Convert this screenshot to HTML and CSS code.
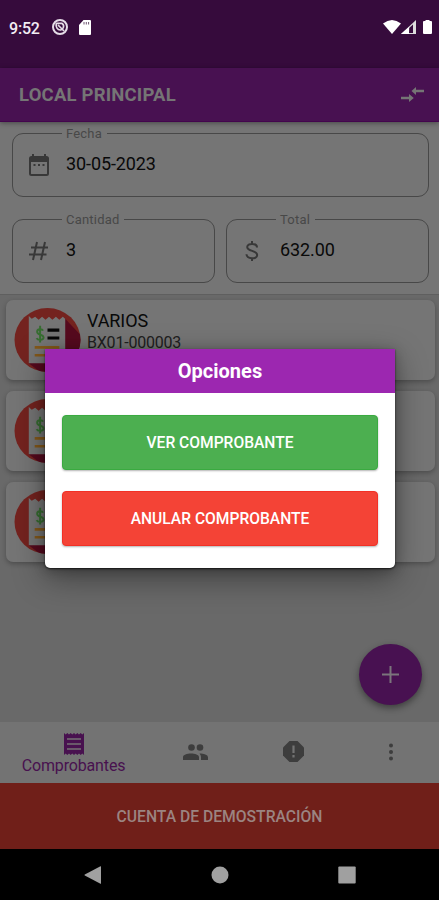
FILE: index.html
```html
<!DOCTYPE html>
<html lang="es">
<head>
<meta charset="utf-8">
<meta name="viewport" content="width=device-width, initial-scale=1">
<title>Local Principal</title>
<link rel="stylesheet" href="styles.css">
</head>
<body>
<svg class="defs" width="0" height="0" aria-hidden="true">
  <defs>
    <clipPath id="disc"><ellipse cx="34" cy="32.500" rx="33.500" ry="32.500"/></clipPath>
    <symbol id="receipt" viewBox="0 0 68 66">
      <g clip-path="url(#disc)">
        <path d="M0 0h68v66H0z" fill="#74231f"/>
        <path d="M51 10l17 18v38H28L15 56z" fill="#560a1e"/>
      </g>
      <path d="M15 8l3 3 3.500-2 3.500 3 3.500-3 3.500 3 3.500-3 3.500 3 3.500-3 3.500 3 3.500-3 2.500 2V56H15z" fill="#757575"/>
      <path d="M29.500 23c-1-2-6-2-6 1 0 4 6.500 2 6.500 6 0 3-6 3-7 .5M26.500 18v17" fill="none" stroke="#376e31" stroke-width="2"/>
      <path d="M34 22.500h12M34 30.500h12" stroke="#080808" stroke-width="3.200"/>
      <path d="M21 40h25M21 48h25" stroke="#84591a" stroke-width="2.600"/>
    </symbol>
  </defs>
</svg>
<div class="phone">
  <header class="status">
    <span class="clock">9:52</span>
    <svg class="status-app" width="18" height="18" viewBox="0 0 18 18"><circle cx="9" cy="9" r="7" fill="none" stroke="#e5dce7" stroke-width="2"/><path d="M5.300 5.300h5.500c3 2 2 6-1.300 6.700-3 .2-5-3-4.200-6.700M7 7l6 6" fill="none" stroke="#e5dce7" stroke-width="1.700"/></svg>
    <svg class="status-card" width="12" height="15" viewBox="0 0 12 15"><path d="M4.500 0H11q1 0 1 1v13q0 1-1 1H1q-1 0-1-1V5z" fill="#fff"/><path d="M5 2v2.500M7.300 2v2.500M9.600 2v2.500" stroke="#6d5470" stroke-width="1"/></svg>
    <svg class="status-wifi" width="18" height="14" viewBox="0 0 18 14"><path d="M0 3.500Q9-3.500 18 3.500L9 14z" fill="#fff"/></svg>
    <svg class="status-signal" width="15" height="14" viewBox="0 0 15 14"><path d="M0 14L15 0v14z" fill="#ddd"/><path d="M8 13l.2-5L12 4.500V13z" fill="#360b3c"/><path d="M0 14l8-7v7z" fill="#fff"/></svg>
    <svg class="status-battery" width="9" height="14" viewBox="0 0 9 14"><path d="M2.500 0h4v1H8q1 0 1 1v11q0 1-1 1H1q-1 0-1-1V2q0-1 1-1h1.500z" fill="#fff"/></svg>
  </header>

  <div class="appbar">
    <h1>LOCAL PRINCIPAL</h1>
    <svg width="23" height="15" viewBox="0 0 23 15" fill="#757575"><path d="M0 9.700h8V7l4.800 4L8 15v-2.700H0zM23 2.700h-8V0l-4.500 4L15 8V5.300h8z"/></svg>
  </div>

  <section class="filters">
    <div class="field">
      <span class="label">Fecha</span>
      <svg class="icon" width="22" height="24" viewBox="0 0 22 24"><rect x="2" y="4" width="18" height="18" rx="1.500" fill="none" stroke="#383838" stroke-width="2"/><path d="M2 4h18v5H2zM4 1h2v4H4zM16 1h2v4h-2zM5.500 11h2v2h-2zM10 11h2v2h-2zM14.500 11h2v2h-2z" fill="#383838"/></svg>
      <span class="value">30-05-2023</span>
    </div>
    <div class="field">
      <span class="label">Cantidad</span>
      <svg class="icon" width="22" height="20" viewBox="0 0 22 20"><path d="M9 1L5 19M17 1l-4 18M3 6.500H20M1 13.500h17.500" stroke="#383838" stroke-width="2" fill="none"/></svg>
      <span class="value">3</span>
    </div>
    <div class="field field-total">
      <span class="label">Total</span>
      <svg class="icon" width="14" height="20" viewBox="0 0 14 20"><path d="M12 6.500C12 1.800 2.200 1.800 2.200 6c0 4.800 10 3 10 8 0 4.500-10.400 4.500-10.700-.7M7 0v3M7 17v3" stroke="#383838" stroke-width="2" fill="none"/></svg>
      <span class="value">632.00</span>
    </div>
  </section>

  <main class="list">
    <article class="card">
      <svg class="avatar"><use href="#receipt"/></svg>
      <div class="info"><div class="name">VARIOS</div><div class="code">BX01-000003</div></div>
    </article>
    <article class="card"><svg class="avatar"><use href="#receipt"/></svg></article>
    <article class="card"><svg class="avatar"><use href="#receipt"/></svg></article>
    <button class="fab" aria-label="Agregar"><svg width="17" height="17" viewBox="0 0 17 17"><path d="M8.500 0v17M0 8.500h17" stroke="#7b757c" stroke-width="2"/></svg></button>
  </main>

  <nav class="tabs">
    <a class="tab active">
      <svg width="20" height="22" viewBox="0 0 20 22"><path d="M0 0l1.700 1.500L3.300 0 5 1.500 6.700 0l1.600 1.500L10 0l1.700 1.500L13.300 0 15 1.500 16.700 0l1.600 1.500L20 0v22l-1.700-1.500-1.600 1.500-1.700-1.500-1.700 1.500-1.600-1.500L10 22l-1.700-1.500L6.700 22 5 20.500 3.300 22l-1.600-1.500L0 22z" fill="#48114f"/><path d="M3 6h14M3 11h14M3 16h14" stroke="#747174" stroke-width="1.700"/></svg>
      <span>Comprobantes</span>
    </a>
    <a class="tab"><svg width="25" height="16" viewBox="0 0 25 16" fill="#3d3d3d"><circle cx="8.500" cy="3.500" r="3.300"/><circle cx="17" cy="3.500" r="3.300"/><path d="M0 16v-2.700C0 8.300 16 8.300 16 13.300V16zM18 16v-3q0-2-1.500-3.500c4 0 8.500 1 8.500 4V16z"/></svg></a>
    <a class="tab"><svg width="21" height="21" viewBox="0 0 21 21"><path d="M6.500 0h8L21 6.500v8L14.500 21h-8L0 14.500v-8z" fill="#3d3d3d"/><path d="M10.500 4.500v7.500M10.500 14v2.500" stroke="#737373" stroke-width="2.200"/></svg></a>
    <a class="tab"><svg width="6" height="18" viewBox="0 0 6 18" fill="#3d3d3d"><circle cx="3" cy="2.500" r="2"/><circle cx="3" cy="9" r="2"/><circle cx="3" cy="15.500" r="2"/></svg></a>
  </nav>

  <div class="demo"><span>CUENTA DE DEMOSTRACIÓN</span></div>

  <footer class="system">
    <svg width="17" height="18" viewBox="0 0 17 18"><path d="M17 .5v17q0 .5-1 0L.8 9.600q-.8-.6 0-1.200L16 .5q1-.5 1 0z" fill="#a0a0a0"/></svg>
    <svg width="18" height="18" viewBox="0 0 18 18"><circle cx="9" cy="9" r="8.500" fill="#a0a0a0"/></svg>
    <svg width="18" height="18" viewBox="0 0 18 18"><rect x=".3" y=".5" width="17.400" height="17" rx="1" fill="#a0a0a0"/></svg>
  </footer>

  <div class="dialog" role="dialog" aria-labelledby="dialog-title">
    <h2 id="dialog-title"><span>Opciones</span></h2>
    <div class="actions">
      <button class="action view"><span>VER COMPROBANTE</span></button>
      <button class="action cancel"><span>ANULAR COMPROBANTE</span></button>
    </div>
  </div>
</div>
</body>
</html>
```
FILE: styles.css
```css
* { box-sizing: border-box; }
body { margin: 0; font-family: Roboto, "Liberation Sans", sans-serif; background: #000; }
svg { display: block; flex: none; }
.defs { position: absolute; }
button { border: 0; padding: 0; font-family: inherit; }

.phone { position: relative; width: 439px; height: 900px; display: flex; flex-direction: column; overflow: hidden; }

.status { height: 68px; flex: none; background: #360b3c; display: flex; align-items: flex-start; padding: 19px 7px 0 9px; }
.clock { color: #f2edf3; font-size: 16px; font-weight: 500; line-height: 19px; width: 42px; letter-spacing: -.2px; }
.status-app { margin-top: -1px; }
.status-card { margin: 1px auto 0 10px; }
.status-wifi { margin-top: 1px; }
.status-signal { margin: 1px 7px 0 0; }
.status-battery { margin-top: 1px; }

.appbar { height: 54px; flex: none; background: #481151; display: flex; align-items: center; justify-content: space-between; padding: 0 15px 0 19px; border-bottom: 1px solid #43054d; box-shadow: 0 1px 5px rgba(0,0,0,.4); position: relative; z-index: 1; }
.appbar h1 { margin: 1px 0 0; font-size: 18.5px; font-weight: 700; color: #757575; letter-spacing: .2px; }

.filters { height: 173px; flex: none; background: #757575; padding: 11px 10px 12px 12px; display: grid; grid-template-columns: 203px 203px; grid-template-rows: 64px 64px; gap: 22px 11px; border-bottom: 1px solid #5f5f5f; }
.field { position: relative; border: 1px solid #484848; border-radius: 11px; display: flex; align-items: center; padding-left: 15px; }
.field:first-child { grid-column: 1 / -1; }
.field .label { position: absolute; left: 49px; top: -8px; padding: 0 5px 0 4px; background: #757575; color: #484848; font-size: 13px; line-height: 15px; letter-spacing: .2px; }
.field .value { margin-left: 16px; color: #090909; font-size: 18px; line-height: 22px; margin-bottom: 3px; letter-spacing: -.1px; }
.field-total { padding-left: 18px; }
.field-total .value { margin-left: 21px; }

.list { position: relative; flex: 1; background: #696969; padding: 5px 4px 0 6px; display: flex; flex-direction: column; gap: 11px; }
.card { height: 80px; flex: none; background: #757575; border-radius: 7px; box-shadow: 0 2px 5px rgba(0,0,0,.27); display: flex; padding: 8px 8px; }
.avatar { width: 67px; height: 65px; }
.info { margin-left: 6px; padding-top: 2px; }
.name { font-size: 18px; line-height: 21px; color: #090909; letter-spacing: -.1px; }
.code { font-size: 16px; line-height: 23px; color: #202020; letter-spacing: -.2px; }
.fab { position: absolute; right: 17px; bottom: 17px; width: 63px; height: 61px; border-radius: 50%; background: #481151; display: flex; align-items: center; justify-content: center; box-shadow: 0 3px 7px rgba(0,0,0,.42); }

.tabs { height: 61px; flex: none; background: #737373; display: grid; grid-template-columns: 147px 97px 98px 97px; }
.tab { display: flex; flex-direction: column; align-items: center; justify-content: center; color: #48114f; padding-bottom: 2px; }
.tab.active { justify-content: flex-start; padding-top: 11px; }
.tab span { font-size: 16px; line-height: 20px; margin-top: 1px; letter-spacing: -.15px; }

.demo { height: 66px; flex: none; background: #701f19; color: #9b8481; display: flex; align-items: center; justify-content: center; font-size: 15.7px; font-weight: 500; }
.system { height: 51px; flex: none; background: #000; display: grid; grid-template-columns: 18px 18px 18px; justify-content: center; column-gap: 109px; align-items: center; }

.dialog { position: absolute; z-index: 3; left: 45px; top: 349px; width: 350px; height: 219px; background: #fff; border-radius: 0 0 5px 5px; box-shadow: 0 1px 2px rgba(0,0,0,.7), 0 10px 32px rgba(0,0,0,.4), 0 2px 12px rgba(0,0,0,.25); }
.dialog h2 { margin: 0; height: 44px; display: flex; align-items: center; justify-content: center; background: #9c27b0; color: #fff; font-size: 20px; font-weight: 700; }
.actions { padding: 22px 17px; display: flex; flex-direction: column; gap: 21px; }
.action { height: 55px; border-radius: 4px; color: #fff; font-size: 15.6px; font-weight: 500; box-shadow: 0 1px 2px rgba(0,0,0,.3); }
.view { background: #4caf50; border: 1px solid #3aaa40; }
.cancel { background: #f44336; border: 1px solid #f23025; }
```
